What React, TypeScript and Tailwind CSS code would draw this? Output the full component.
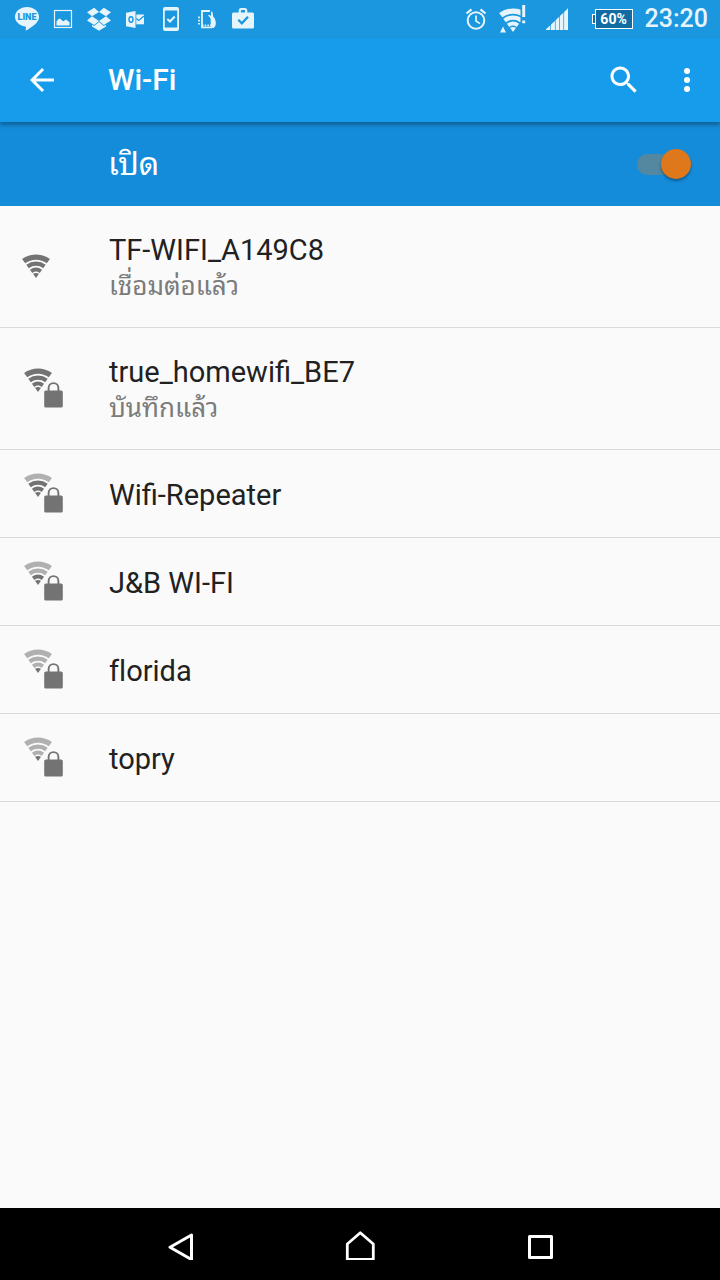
import React, { useState } from "react";

/* ── Types ─────────────────────────────────────────────────────────────────── */
interface Network {
  ssid: string;
  status?: string;
  level: number;
  secured: boolean;
  noLigatures?: boolean;
}

const networks: Network[] = [
  { ssid: "TF-WIFI_A149C8", status: "เชื่อมต่อแล้ว", level: 4, secured: false },
  { ssid: "true_homewifi_BE7", status: "บันทึกแล้ว", level: 4, secured: true },
  { ssid: "Wifi-Repeater", level: 3, secured: true },
  { ssid: "J&B WI-FI", level: 2, secured: true },
  { ssid: "florida", level: 1, secured: true, noLigatures: true },
  { ssid: "topry", level: 1, secured: true },
];

/* ── Signal fan, 28x24 with the tip at the bottom centre ───────────────────── */
const BANDS = [
  { r: 8.3, width: 4, level: 2 },
  { r: 14.3, width: 4.3, level: 3 },
  { r: 20.9, width: 5.4, level: 4 },
];

function Fan({ level, on, off }: { level: number; on: string; off: string }) {
  return (
    <g fill="none">
      <path d="M14 24 11 19.8Q14 18.4 17 19.8Z" fill={on} />
      {BANDS.map((b) => (
        <path
          key={b.r}
          d={`M${14 - 0.59 * b.r} ${24 - 0.807 * b.r}A${b.r} ${b.r} 0 0 1 ${14 + 0.59 * b.r} ${24 - 0.807 * b.r}`}
          stroke={level >= b.level ? on : off}
          strokeWidth={b.width}
        />
      ))}
    </g>
  );
}

function NetworkIcon({ level, secured }: { level: number; secured: boolean }) {
  if (!secured) {
    return (
      <svg width="42" height="25" viewBox="0 0 42 25" aria-hidden="true">
        <Fan level={level} on="#737373" off="#b0b0b0" />
      </svg>
    );
  }
  return (
    <svg width="42" height="41" viewBox="-2 0 42 41" aria-hidden="true">
      <Fan level={level} on="#737373" off="#b0b0b0" />
      <path d="M24.5 23V19.5a5 5 0 0 1 10 0V23" fill="#fafafa" stroke="#fafafa" strokeWidth="4.5" />
      <path d="M24.6 23V20a4.9 4.9 0 0 1 9.8 0V23" fill="none" stroke="#737373" strokeWidth="1.9" />
      <rect x="20.2" y="22.5" width="18.6" height="17" rx="1.6" fill="#737373" />
    </svg>
  );
}

/* ── Status bar ────────────────────────────────────────────────────────────── */
const INK = "#e6f4fc";
const SKY = "#1b97df";

function StatusBar() {
  return (
    <div className="flex h-[38px] items-center justify-between bg-[#1b97df] pr-3 pl-[15px]">
      <div className="flex items-center gap-3">
        <svg width="24" height="24" viewBox="0 0 24 24" aria-hidden="true">
          <path
            d="M12 0C5.4 0 0 4.3 0 9.8c0 4.8 4.3 8.8 10 9.6.7.1 1.1.5 1 1.2l-.3 2.1c-.1.8.4 1 1 .6 3.3-1.9 8.3-5.3 10.6-8.5C23.400 13.400 24 11.700 24 9.800 24 4.300 18.600 0 12 0Z"
            fill={INK}
          />
          <text x="12" y="13" textAnchor="middle" fontFamily="Roboto, sans-serif" fontWeight="900" fontSize="9" fill={SKY}>
            LINE
          </text>
        </svg>
        <svg width="24" height="24" viewBox="0 0 24 24" aria-hidden="true">
          <rect x="3.500" y="3.500" width="17" height="17" fill="none" stroke={INK} strokeWidth="1.2" />
          <path d="M5.500 18.500v-4l2-2.500 1.500-.5 2 2 1.500.8 2.500-1.800 3.500 2.800v3.200Z" fill={INK} />
        </svg>
        <svg width="24" height="24" viewBox="0 0 24 24" fill={INK} aria-hidden="true">
          <path d="M7.200 .8 0 5.300l5 4 7-4.300ZM16.800 .8 24 5.300l-5 4-7-4.300ZM0 13.400l7.200 4.600 4.800-4.100-7-4.600ZM24 13.400l-7.200 4.600-4.800-4.100 7-4.600ZM12 15l-4.800 4.100-2.200-1.400v1.700L12 23.700l7-4.300v-1.700l-2.200 1.400Z" />
        </svg>
        <svg width="24" height="24" viewBox="0 0 24 24" aria-hidden="true">
          <path d="M3 5.800 12.500 4v17L3 19.200Z" fill={INK} />
          <ellipse cx="8" cy="12.5" rx="2" ry="2.700" fill="none" stroke={SKY} strokeWidth="1.4" />
          <path d="M13.300 7.500H21V17.300H13.300Z" fill={INK} />
          <path d="M13.300 11.500 15.800 13.500 20.800 9" fill="none" stroke={SKY} strokeWidth="1.2" />
        </svg>
        <svg width="24" height="24" viewBox="0 0 24 24" fill="none" stroke={INK} aria-hidden="true">
          <path
            fillRule="evenodd"
            d="M6 0h12a2 2 0 0 1 2 2v20a2 2 0 0 1-2 2H6a2 2 0 0 1-2-2V2a2 2 0 0 1 2-2ZM5.800 3.500v17h12.400v-17Z"
            fill={INK}
            stroke="none"
          />
          <path d="M8.300 12 11 14.500 15.700 9.500" strokeWidth="2" />
        </svg>
        <svg width="24" height="24" viewBox="0 0 24 24" fill="none" stroke={INK} aria-hidden="true">
          <path d="M15 4H7V20.300H17" strokeWidth="1.8" />
          <path d="M7 18.300h10" strokeWidth="1.5" strokeDasharray="1.5 1.2" />
          <path d="M4 9.500v9" strokeWidth="1.8" strokeDasharray="1.7 1.5" />
          <path
            d="M13 8.300c1-.5 2.300 0 3 .7V4.500c1.300-.3 1.700.8 1.800 2l.4 3c1.800 2 2.800 4.500 2.600 7-.1 2.500-1.300 4.500-3.300 4.500-1.700-.2-2-2.500-1.800-4.500.1-2 .2-4.500-.5-5.700Z"
            fill={INK}
            stroke="none"
          />
        </svg>
        <svg width="24" height="24" viewBox="0 0 24 24" fill="none" aria-hidden="true">
          <path d="M8.800 6V3.500a1.500 1.500 0 0 1 1.500-1.500h3.400a1.500 1.500 0 0 1 1.500 1.500V6" stroke={INK} strokeWidth="2.2" />
          <rect x="1" y="5.500" width="22" height="16" rx="1.500" fill={INK} />
          <path d="M7.300 12.800 10.800 16.300 17 9.700" stroke={SKY} strokeWidth="2.3" />
        </svg>
      </div>

      <div className="flex items-center">
        <svg className="mr-3" width="22" height="24" viewBox="0 0 22 24" fill="none" stroke={INK} aria-hidden="true">
          <circle cx="11" cy="13.500" r="8.300" strokeWidth="2" />
          <path d="M11 8.500v5.500l4 2.600" strokeWidth="1.7" />
          <path d="M1.500 6.500 6.500 2.300M20.500 6.500 15.500 2.300" strokeWidth="2.2" />
        </svg>
        <svg className="mr-5" width="27" height="28" viewBox="0 0 27 28" aria-hidden="true">
          <clipPath id="fan-cut">
            <path d="M0 0H21.500V28H0Z" />
          </clipPath>
          <g clipPath="url(#fan-cut)">
            <g transform="translate(0 3)">
              <Fan level={4} on={INK} off={INK} />
            </g>
          </g>
          <path d="M4 21.500 7 27.500H1ZM23.200 0h3V12h-3ZM23.200 15.500h3V18.300h-3Z" fill={INK} />
        </svg>
        <svg className="mr-6" width="22" height="22" viewBox="0 0 22 22" fill={INK} aria-hidden="true">
          <path d="M0 22v-.7L4.300 17.200V22ZM5 22V16.600L8.900 12.900V22ZM9.600 22V12.200L13.200 8.800V22ZM13.900 22V8.100L17.400 4.800V22ZM18.100 22V4.100L22 .2V22Z" />
        </svg>
        <div className="mr-3 flex items-center">
          <span className="h-[10px] w-[3px] border border-r-0 border-white bg-[#106ca3]" />
          <span className="flex h-5 w-[38px] items-center justify-center border border-white bg-[#106ca3] text-sm leading-5 font-bold text-white">
            60%
          </span>
        </div>
        <time className="text-[25px] leading-8 font-medium text-[#e6f4fc]">23:20</time>
      </div>
    </div>
  );
}

/* ── App bar and master switch ─────────────────────────────────────────────── */
function AppBar() {
  return (
    <header className="relative flex h-[84px] items-center bg-[#169ceb] pr-[15px] pl-6 text-white shadow-[0_3px_4px_rgba(0,0,0,0.3)]">
      <button type="button" aria-label="Back">
        <svg width="36" height="36" viewBox="0 0 24 24" fill="currentColor">
          <path d="M20 11H7.830l5.590-5.590L12 4l-8 8 8 8 1.410-1.410L7.830 13H20v-2z" />
        </svg>
      </button>
      <h1 className="ml-12 flex-1 text-[30px] leading-9 font-medium">Wi-Fi</h1>
      <button type="button" aria-label="Search" className="mr-[27px]">
        <svg width="36" height="36" viewBox="0 0 24 24" fill="currentColor">
          <path d="M15.500 14h-.79l-.28-.27C15.410 12.590 16 11.110 16 9.500 16 5.910 13.090 3 9.500 3S3 5.910 3 9.500 5.910 16 9.500 16c1.610 0 3.090-.59 4.230-1.570l.27.28v.79l5 4.990L20.490 19l-4.990-5zm-6 0C7.010 14 5 11.990 5 9.500S7.010 5 9.500 5 14 7.010 14 9.500 11.990 14 9.500 14z" />
        </svg>
      </button>
      <button type="button" aria-label="More options">
        <svg width="36" height="36" viewBox="0 0 24 24" fill="currentColor">
          <circle cx="12" cy="6" r="2" />
          <circle cx="12" cy="12" r="2" />
          <circle cx="12" cy="18" r="2" />
        </svg>
      </button>
    </header>
  );
}

function MasterSwitch() {
  const [on, setOn] = useState(true);

  return (
    <label className="flex h-[84px] cursor-pointer items-center justify-between bg-[#158cda] pr-[29px] pl-[108px] text-white">
      <span className="text-[32px] leading-9">เปิด</span>
      <input
        type="checkbox"
        role="switch"
        className="peer sr-only"
        checked={on}
        onChange={(e) => setOn(e.target.checked)}
      />
      <span className="flex h-[21px] w-[54px] items-center justify-start rounded-full bg-[#5388a0] peer-checked:justify-end">
        <span className="size-[30px] shrink-0 rounded-full bg-[#df781b] shadow-[0_2px_3px_rgba(0,0,0,0.35)]" />
      </span>
    </label>
  );
}

/* ── Network list ──────────────────────────────────────────────────────────── */
function NetworkRow({ network }: { network: Network }) {
  return (
    <li className="border-b border-[#dadada]">
      <button
        type="button"
        className={`flex w-full items-center pl-[22px] text-left ${network.status ? "h-[121px]" : "h-[87px]"}`}
      >
        <NetworkIcon level={network.level} secured={network.secured} />
        <span className="ml-[45px] flex flex-col pt-[3px]">
          <span
            className={`text-[29px] leading-9 text-[#212121] ${network.noLigatures ? "[font-variant-ligatures:none]" : ""}`}
          >
            {network.ssid}
          </span>
          {network.status && (
            <span className="text-[26px] leading-9 text-[#7b7b7b]">{network.status}</span>
          )}
        </span>
      </button>
    </li>
  );
}

/* ── Navigation bar ────────────────────────────────────────────────────────── */
function NavBar() {
  return (
    <nav className="flex h-[72px] justify-center bg-black text-white">
      <button type="button" aria-label="Back" className="flex w-1/4 items-center justify-center">
        <svg width="32" height="32" viewBox="0 0 32 32" fill="none" stroke="currentColor" strokeWidth="3" strokeLinejoin="round">
          <path d="M27.500 7V31.500L6 19.200Z" />
        </svg>
      </button>
      <button type="button" aria-label="Home" className="flex w-1/4 items-center justify-center">
        <svg width="32" height="32" viewBox="0 0 32 32" fill="none" stroke="currentColor" strokeWidth="2.8" strokeLinejoin="round">
          <path d="M3.300 16 16.300 4.700 29.300 16V31.300H3.300Z" />
        </svg>
      </button>
      <button type="button" aria-label="Recent apps" className="flex w-1/4 items-center justify-center">
        <svg width="32" height="32" viewBox="0 0 32 32" fill="none" stroke="currentColor" strokeWidth="3" strokeLinejoin="round">
          <path d="M5.500 8.500H27.500V29.500H5.500Z" />
        </svg>
      </button>
    </nav>
  );
}

export default function App() {
  return (
    <div className="flex min-h-screen flex-col bg-[#fafafa] font-[Roboto,'Noto_Sans_Thai_Looped','Noto_Sans_Thai','Noto_Sans',sans-serif]">
      <StatusBar />
      <AppBar />
      <MasterSwitch />
      <main className="flex-1">
        <ul>
          {networks.map((n) => (
            <NetworkRow key={n.ssid} network={n} />
          ))}
        </ul>
      </main>
      <NavBar />
    </div>
  );
}
